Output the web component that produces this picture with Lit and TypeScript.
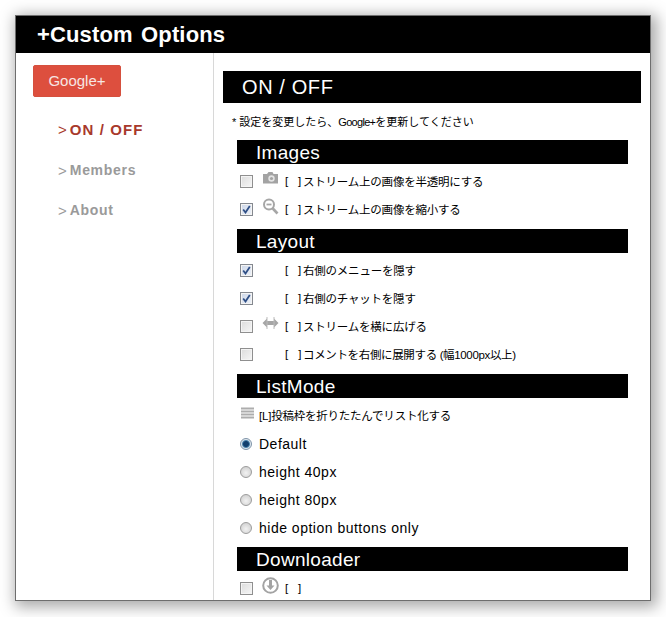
import { LitElement, html, css, svg } from "lit";
import { customElement } from "lit/decorators.js";

const camera = svg`<svg width="17" height="14" viewBox="0 0 17 14"><path fill="#a3a3a3" d="M1 3h4l1.500-2h4l1 2h4.500v9.500H1z"/><circle cx="9.500" cy="7.500" r="3.200" fill="#e4e4e4"/><circle cx="9.500" cy="7.500" r="1.600" fill="#a3a3a3"/></svg>`;
const zoomIcon = svg`<svg width="17" height="17" viewBox="0 0 17 17"><circle cx="7" cy="6.500" r="5" fill="#fff" stroke="#a6a6a6" stroke-width="2"/><path d="M4.500 6.500h5" stroke="#a6a6a6" stroke-width="1.800"/><path d="M10.800 10.500l4.700 5" stroke="#a6a6a6" stroke-width="2.600"/></svg>`;
const arrows = svg`<svg width="17" height="14" viewBox="0 0 17 14"><path fill="#a6a6a6" d="M0.500 7L5 2.500v2.500h7V2.500L16.500 7 12 11.500V9H5v2.500z"/><path d="M5 1v12M12 1v12" stroke="#bbb" stroke-width="1"/></svg>`;
const lines = svg`<svg width="13" height="14" viewBox="0 0 13 14"><path d="M0 1.500h13M0 4.500h13M0 7.500h13M0 10.500h13" stroke="#adadad" stroke-width="2"/></svg>`;
const download = svg`<svg width="17" height="17" viewBox="0 0 17 17"><circle cx="8.500" cy="8.500" r="7.300" fill="#fff" stroke="#a3a3a3" stroke-width="2"/><path fill="#a3a3a3" d="M7 3h3v5.500h2.500L8.500 13 4.500 8.500H7z"/></svg>`;

const box = (checked: boolean) => html`<span class="check ${checked ? "on" : ""}">
  ${checked ? svg`<svg width="9" height="9" viewBox="0 0 9 9"><path d="M1.200 4.500L3.500 7.500 7.800 1" fill="none" stroke="#2f4f86" stroke-width="1.800"/></svg>` : ""}
</span>`;

const row = (checked: boolean, icon: unknown, text: string, tight = false) => html`<div class="row">
  ${box(checked)}<span class="icon">${icon}</span><span class="label ${tight ? "tight" : ""}"><span class="brackets"><span>[</span><span>]</span></span>${text}</span>
</div>`;

const radio = (on: boolean, text: string) => html`<div class="row radio-row">
  <span class="radio ${on ? "on" : ""}"></span><span class="latin">${text}</span>
</div>`;

@customElement("app-root")
export class AppRoot extends LitElement {
  static styles = css`
    :host {
      display: block;
      width: 666px;
      height: 617px;
      box-sizing: border-box;
      padding: 15px 15px 16px 15px;
      background: #fff;
      overflow: hidden;
      font-family: "Liberation Sans", "Noto Sans CJK JP", sans-serif;
      color: #000;
    }
    .window {
      box-sizing: border-box;
      width: 636px;
      height: 586px;
      border: 1px solid #6e6e6e;
      box-shadow: 3px 3px 14px 3px rgba(0, 0, 0, 0.34);
      background: #fff;
      display: flex;
      flex-direction: column;
      overflow: hidden;
    }
    .topbar {
      height: 37px;
      flex: none;
      background: #000;
      color: #fff;
      font-size: 22px;
      font-weight: bold;
      line-height: 37px;
      padding-left: 21px;
      letter-spacing: 0.15px;
      word-spacing: 2px;
    }
    .main {
      flex: 1;
      display: flex;
      min-height: 0;
    }
    .side {
      width: 198px;
      flex: none;
      box-sizing: border-box;
      border-right: 1px solid #d8d8d8;
      padding: 12px 0 0 17px;
    }
    .gplus {
      width: 88px;
      height: 32px;
      box-sizing: border-box;
      border: 1px solid #d5503e;
      border-radius: 2px;
      background: #dd4f3e;
      color: #f6e6e3;
      font-size: 15px;
      line-height: 30px;
      text-align: center;
      margin-bottom: 12px;
    }
    .nav {
      height: 40px;
      box-sizing: border-box;
      padding: 2px 0 0 25px;
      display: flex;
      align-items: center;
      gap: 3px;
      font-size: 14px;
      font-weight: bold;
      letter-spacing: 0.7px;
      color: #9a9a9a;
    }
    .nav .gt {
      font-weight: normal;
      font-size: 15px;
      letter-spacing: 0;
    }
    .nav.active {
      padding-top: 0;
      color: #a8392c;
      font-size: 15px;
      letter-spacing: 1.1px;
    }
    .content {
      flex: 1;
      min-width: 0;
      padding: 18px 9px 0 9px;
    }
    .section {
      height: 32px;
      background: #000;
      color: #fff;
      font-size: 20px;
      line-height: 33px;
      padding-left: 19px;
      letter-spacing: 0.6px;
    }
    .note {
      height: 20px;
      margin: 9px 0 8px 9px;
      font-size: 11px;
      line-height: 20px;
      white-space: nowrap;
    }
    .note .g {
      letter-spacing: -0.7px;
    }
    .group {
      margin: 0 13px 0 14px;
    }
    .sub {
      height: 24px;
      background: #000;
      color: #fff;
      font-size: 19px;
      line-height: 25px;
      padding-left: 19px;
      letter-spacing: 0.3px;
      font-kerning: none;
    }
    .rows {
      padding: 3px 0 6px;
    }
    .rows.tight {
      padding-bottom: 5px;
    }
    .row {
      height: 28px;
      display: flex;
      align-items: center;
      padding-left: 3px;
      font-size: 11.500px;
      white-space: nowrap;
    }
    .row.lead {
      height: 29px;
      padding-left: 4px;
    }
    .check {
      width: 13px;
      height: 13px;
      box-sizing: border-box;
      border: 1px solid #8f8f8f;
      background: linear-gradient(135deg, #dcdcdc, #f6f6f6);
      box-shadow: inset 0 0 0 1px #f4f4f4;
      display: flex;
      align-items: center;
      justify-content: center;
      flex: none;
      margin-top: 1px;
    }
    .check.on {
      background: linear-gradient(135deg, #ccd6e8, #eef2f8);
      border-color: #84888f;
    }
    .icon {
      width: 17px;
      height: 17px;
      margin: -6px 5px 0 9px;
      flex: none;
      display: flex;
      align-items: center;
      justify-content: center;
    }
    .label {
      letter-spacing: -0.22px;
      display: inline-flex;
      align-items: center;
      margin-top: -1px;
    }
    .label.tight {
      letter-spacing: -0.35px;
    }
    .brackets {
      width: 19px;
      flex: none;
      display: flex;
      justify-content: space-between;
      padding: 0 2px 0 1px;
      box-sizing: border-box;
    }
    .listicon {
      width: 13px;
      height: 14px;
      margin: -4px 5px 0 0;
      flex: none;
    }
    .radio {
      width: 12px;
      height: 12px;
      box-sizing: border-box;
      border-radius: 50%;
      border: 1px solid #9c9c9c;
      background: radial-gradient(circle at 50% 60%, #f2f2f2, #c9c9c9);
      flex: none;
      margin-right: 7px;
    }
    .radio.on {
      border-color: #7e93a8;
      background: radial-gradient(circle, #123f6d 0 2.500px, #4c84ad 3.500px, #dfe8ef 4.500px);
    }
    .latin {
      font-size: 14px;
      letter-spacing: 0.5px;
    }
  `;

  render() {
    return html`<div class="window">
      <div class="topbar">+Custom Options</div>
      <div class="main">
        <nav class="side">
          <div class="gplus">Google+</div>
          <div class="nav active"><span class="gt">&gt;</span><span>ON / OFF</span></div>
          <div class="nav"><span class="gt">&gt;</span><span>Members</span></div>
          <div class="nav"><span class="gt">&gt;</span><span>About</span></div>
        </nav>
        <div class="content">
          <div class="section">ON / OFF</div>
          <div class="note">* 設定を変更したら、<span class="g">Google+</span>を更新してください</div>
          <div class="group">
            <div class="sub">Images</div>
            <div class="rows">
              ${row(false, camera, "ストリーム上の画像を半透明にする")}
              ${row(true, zoomIcon, "ストリーム上の画像を縮小する")}
            </div>
            <div class="sub">Layout</div>
            <div class="rows">
              ${row(true, "", "右側のメニューを隠す")}
              ${row(true, "", "右側のチャットを隠す")}
              ${row(false, arrows, "ストリームを横に広げる")}
              ${row(false, "", "コメントを右側に展開する (幅1000px以上)", true)}
            </div>
            <div class="sub">ListMode</div>
            <div class="rows tight">
              <div class="row lead"><span class="listicon">${lines}</span><span class="label">[L]投稿枠を折りたたんでリスト化する</span></div>
              ${radio(true, "Default")}
              ${radio(false, "height 40px")}
              ${radio(false, "height 80px")}
              ${radio(false, "hide option buttons only")}
            </div>
            <div class="sub">Downloader</div>
            <div class="rows">${row(false, download, "")}</div>
          </div>
        </div>
      </div>
    </div>`;
  }
}
